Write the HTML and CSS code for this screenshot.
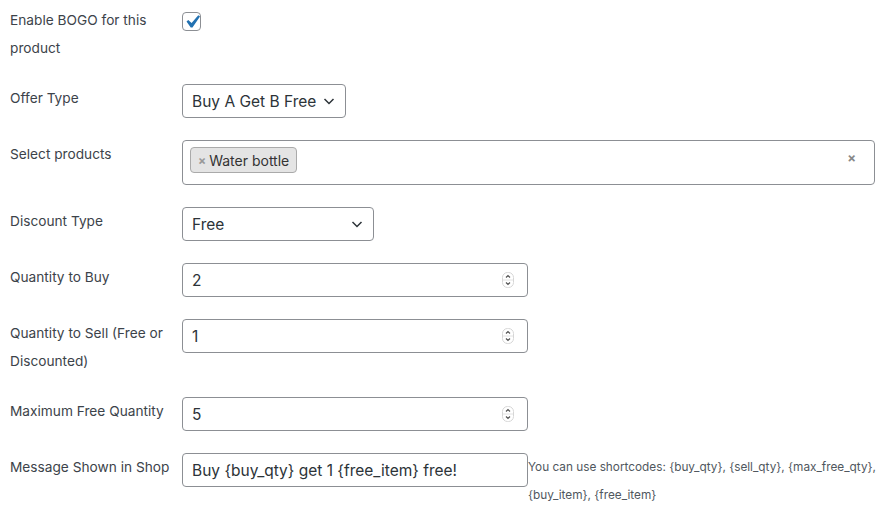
FILE: index.html
```html
<!DOCTYPE html>
<html lang="en">
<head>
    <meta charset="UTF-8">
    <meta name="viewport" content="width=device-width, initial-scale=1.0">
    <title>BOGO Settings</title>
    <link rel="stylesheet" href="styles.css">
</head>
<body>
<div class="bogo_form">
    <div class="row first">
        <label class="label">Enable BOGO for this product</label>
        <div class="field">
            <span class="checkbox">
                <svg viewBox="0 0 20 20" width="20" height="20"><path d="M14.83 4.89l1.34.94-5.81 8.38H9.02L5.78 9.67l1.34-1.25 2.57 2.4z" fill="#2271b1"/></svg>
            </span>
        </div>
    </div>
    <div class="row">
        <label class="label">Offer Type</label>
        <div class="field">
            <div class="input select offer_select">
                <span>Buy A Get B Free</span>
                <svg class="chevron" viewBox="0 0 16 16" width="16" height="16"><polyline points="3.5,6 8,10.5 12.5,6" fill="none" stroke="#2c3338" stroke-width="1.5"/></svg>
            </div>
        </div>
    </div>
    <div class="row">
        <label class="label">Select products</label>
        <div class="field">
            <div class="input multi_select">
                <span class="tag"><span class="tag_x">×</span>Water bottle</span>
                <span class="clear">×</span>
            </div>
        </div>
    </div>
    <div class="row">
        <label class="label">Discount Type</label>
        <div class="field">
            <div class="input select discount_select">
                <span>Free</span>
                <svg class="chevron" viewBox="0 0 16 16" width="16" height="16"><polyline points="3.5,6 8,10.5 12.5,6" fill="none" stroke="#2c3338" stroke-width="1.5"/></svg>
            </div>
        </div>
    </div>
    <div class="row">
        <label class="label">Quantity to Buy</label>
        <div class="field">
            <div class="input number"><span>2</span><span class="spinner"></span></div>
        </div>
    </div>
    <div class="row">
        <label class="label">Quantity to Sell (Free or Discounted)</label>
        <div class="field">
            <div class="input number"><span>1</span><span class="spinner"></span></div>
        </div>
    </div>
    <div class="row">
        <label class="label">Maximum Free Quantity</label>
        <div class="field">
            <div class="input number"><span>5</span><span class="spinner"></span></div>
        </div>
    </div>
    <div class="row">
        <label class="label">Message Shown in Shop</label>
        <div class="field">
            <div class="input text"><span>Buy {buy_qty} get 1 {free_item} free!</span></div>
            <p class="description">You can use shortcodes: {buy_qty}, {sell_qty}, {max_free_qty}, {buy_item}, {free_item}</p>
        </div>
    </div>
</div>
<script>
    // same stepper icon for every number field
    var spinnerSvg = '<svg viewBox="0 0 12 16" width="12" height="16">' +
        '<rect x="0.5" y="0.5" width="11" height="15" rx="5" fill="#fff" stroke="#d6d6d6"/>' +
        '<line x1="1" y1="8" x2="11" y2="8" stroke="#e2e2e2"/>' +
        '<polyline points="4,5.5 6,3.5 8,5.5" fill="none" stroke="#555" stroke-width="1.2"/>' +
        '<polyline points="4,10.5 6,12.5 8,10.5" fill="none" stroke="#555" stroke-width="1.2"/>' +
        '</svg>';
    document.querySelectorAll('.spinner').forEach(function (el) {
        el.innerHTML = spinnerSvg;
    });
</script>
</body>
</html>
```

FILE: styles.css
```css
body, html {
    margin: 0;
    padding: 0;
    background: #ffffff;
    font-family: Inter, "Noto Sans", sans-serif;
}
.bogo_form {
    display: flex;
    flex-direction: column;
}
.row {
    display: flex;
    align-items: flex-start;
    padding: 11px 0;
}
.row.first {
    padding-top: 6px;
}
.label {
    width: 162px;
    padding-left: 10px;
    margin-right: 10px;
    font-size: 13.7px;
    line-height: 28px;
    color: #3c434a;
}
.field {
    display: flex;
    align-items: flex-start;
}
.checkbox {
    width: 17px;
    height: 17px;
    margin-top: 6px;
    border: 1px solid #8c8f94;
    border-radius: 4px;
    display: flex;
    align-items: center;
    justify-content: center;
}
.checkbox svg {
    width: 26px;
    height: 26px;
    flex-shrink: 0;
}
.input {
    box-sizing: border-box;
    height: 34px;
    border: 1px solid #8c8f94;
    border-radius: 4px;
    padding: 0 8px 0 9px;
    display: flex;
    align-items: center;
    justify-content: space-between;
    font-size: 15.5px;
    color: #2c3338;
    background: #fff;
    white-space: nowrap;
}
.offer_select {
    width: 164px;
}
.discount_select {
    width: 192px;
}
.chevron {
    margin-left: 4px;
    flex-shrink: 0;
}
.number, .text {
    width: 346px;
}
.spinner {
    display: flex;
    margin-right: 5px;
}
.multi_select {
    width: 693px;
    height: 45px;
    padding: 0 8px 0 7px;
    align-items: flex-start;
}
.tag {
    box-sizing: border-box;
    height: 26px;
    margin-top: 6px;
    display: flex;
    align-items: center;
    padding: 0 7px 0 7px;
    background: #e4e4e4;
    border: 1px solid #aaaaaa;
    border-radius: 4px;
    font-size: 14px;
    color: #333333;
}
.tag_x {
    color: #999999;
    font-weight: bold;
    font-size: 12px;
    margin-right: 3px;
}
.clear {
    color: #888888;
    font-weight: bold;
    font-size: 13px;
    line-height: 16px;
    margin-top: 9px;
    margin-right: 10px;
}
.description {
    margin: 0;
    max-width: 362px;
    font-size: 11.8px;
    line-height: 28px;
    color: #50575e;
}
```
